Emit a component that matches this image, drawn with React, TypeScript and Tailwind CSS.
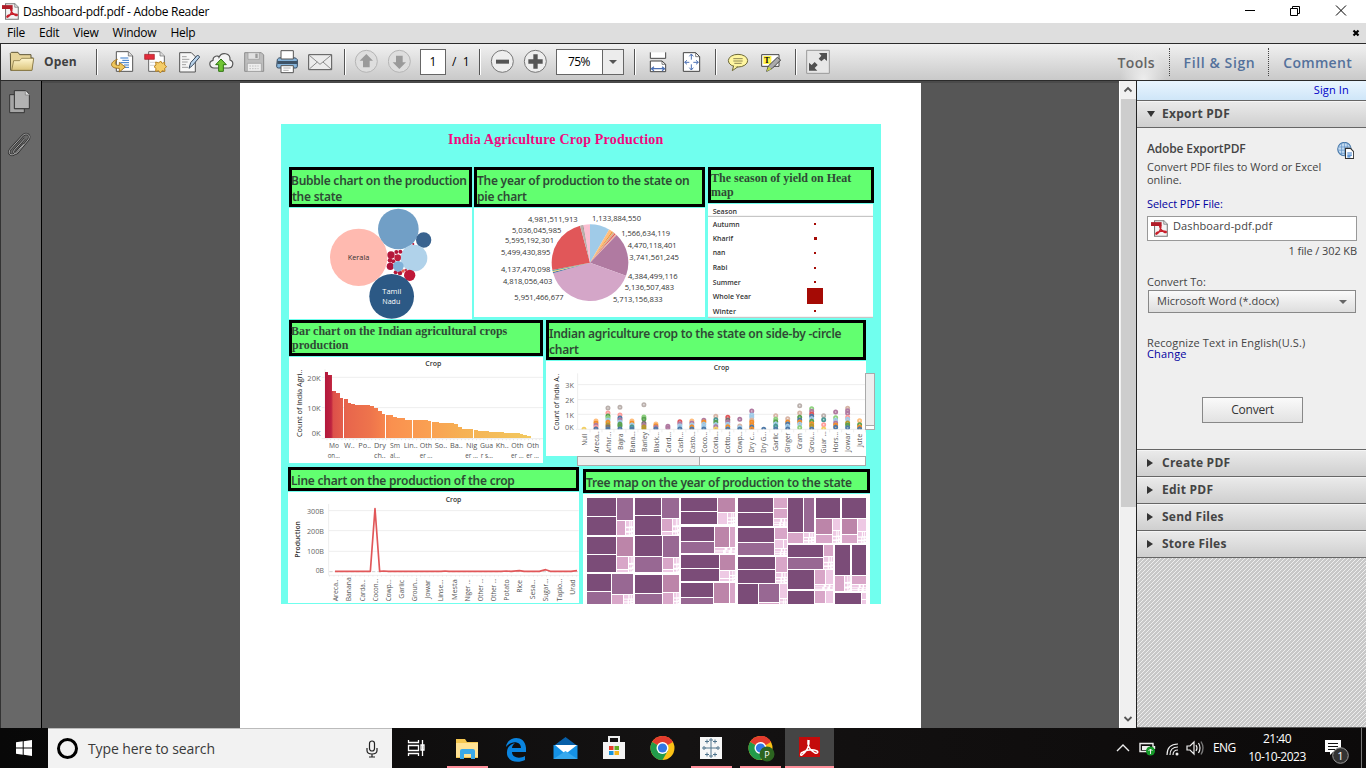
import React from "react";

type Kids = { children?: React.ReactNode };

/* ---------- toolbar helpers: icons are drawn on a grid of three units per pixel ---------- */
function Slot({ x, w, y = 132, children }: Kids & { x: number; w: number; y?: number }) {
  return (
    <svg className="block h-9 shrink-0" width={w} height={36} viewBox={`${x} ${y} ${w * 3} 108`}>
      {children}
    </svg>
  );
}
function Sep() {
  return <div className="h-[26px] w-[2px] shrink-0 border-l border-[#555] bg-white" />;
}
function Label({ x, y, w, s = 22, b, c = "#333", anchor = "start", font = "Open Sans, Noto Sans, sans-serif", children }: any) {
  return (
    <text x={x} y={y} fontSize={s} fontWeight={b || 400} fill={c} textAnchor={anchor} fontFamily={font} textLength={w} lengthAdjust="spacingAndGlyphs">
      {children}
    </text>
  );
}
function VLabel({ x, y, w, s = 21, b, c = "#555", children }: any) {
  return (
    <text transform={`translate(${x} ${y}) rotate(-90)`} fontSize={s} fontWeight={b || 400} fill={c} textLength={w} lengthAdjust="spacingAndGlyphs" fontFamily="Open Sans, Noto Sans, sans-serif">
      {children}
    </text>
  );
}

function PdfIcon({ size }: { size: number }) {
  return (
    <svg width={size} height={size} viewBox="0 0 48 48" className="block shrink-0">
      <path d="M10 2h26l10 10v34H10z" fill="#f4f4f4" stroke="#777" strokeWidth="3" />
      <path d="M36 2v10h10" fill="#ddd" stroke="#777" strokeWidth="2" />
      <path d="M0 6h30v11H0z" fill="#b01c28" />
      <path d="M28 16c1 9-5 20-12 24-4 1-3-4 4-6 7-3 15-4 22-2 3 2 0 5-4 3-7-4-13-12-14-19" fill="none" stroke="#c8202c" strokeWidth="4" />
    </svg>
  );
}

/* ---------- charts ---------- */
function BubbleChart() {
  const dots = [
    [330, 405, 11, "#b4173a"], [346, 396, 6, "#b4173a"], [358, 395, 6, "#b4173a"], [350, 413, 10, "#be1f3d"],
    [327, 421, 7, "#b4173a"], [337, 424, 6, "#b4173a"], [328, 439, 11, "#ae123a"], [344, 457, 6, "#b4173a"],
    [357, 459, 7, "#b4173a"], [366, 453, 5, "#e8604c"], [374, 450, 4, "#c9304a"], [397, 372, 3, "#b4173a"],
    [386, 466, 17, "#be1838"], [352, 439, 16, "#7fb0d8"],
  ] as const;
  return (
    <svg className="block bg-white" width={183} height={111} viewBox="24 264 549 333">
      <circle cx="233" cy="412" r="86" fill="#ffbab0" />
      <circle cx="352" cy="327" r="61" fill="#719fc6" />
      <circle cx="428" cy="360" r="23" fill="#39638f" />
      <circle cx="399" cy="414" r="40" fill="#b0d2ea" />
      {dots.map((d, i) => <circle key={i} cx={d[0]} cy={d[1]} r={d[2]} fill={d[3]} />)}
      <circle cx="332" cy="529" r="67" fill="#2c5985" />
      <Label x={200} y={419} w={65} s={21}>Kerala</Label>
      <Label x={304} y={522} w={57} s={21} c="#fff">Tamil</Label>
      <Label x={304} y={552} w={54} s={21} c="#fff">Nadu</Label>
    </svg>
  );
}

function PieChart() {
  const cx = 390, cy = 308, r = 115;
  const slices: [number, number, string][] = [
    [0, 30, "#a0cbe8"], [30, 35, "#ffbe7d"], [35, 37, "#f28e2b"], [37, 40, "#d9b48c"], [40, 42, "#e15759"], [42, 44, "#f3b8a0"],
    [44, 110, "#b07aa1"], [110, 254, "#d4a6c8"], [254, 256, "#4e79a7"], [256, 257.5, "#f1ce63"], [257.5, 259, "#499894"],
    [259, 345, "#e15759"], [345, 349, "#bab0ac"], [349, 350, "#79706e"], [350, 360, "#fabfd2"],
  ];
  const p = (a: number) => {
    const t = (a * Math.PI) / 180;
    return `${cx + r * Math.sin(t)} ${cy - r * Math.cos(t)}`;
  };
  const labels: [number, number, number, string][] = [
    [204, 185, 149, "4,981,511,913"], [396, 182, 147, "1,133,884,550"], [156, 219, 148, "5,036,045,985"], [135, 249, 147, "5,595,192,301"],
    [123, 285, 148, "5,499,430,895"], [123, 335, 148, "4,137,470,098"], [129, 371, 148, "4,818,056,403"], [163, 420, 148, "5,951,466,677"],
    [484, 228, 146, "1,566,634,119"], [503, 264, 147, "4,470,118,401"], [508, 300, 149, "3,741,561,245"], [504, 357, 149, "4,384,499,116"],
    [494, 390, 148, "5,136,507,483"], [459, 426, 149, "5,713,156,833"],
  ];
  return (
    <svg className="block bg-white" width={231} height={109} viewBox="42 144 693 327">
      {slices.map(([a, b, c]) => (
        <path key={a} fill={c} d={`M${cx} ${cy}L${p(a)}A${r} ${r} 0 ${b - a > 180 ? 1 : 0} 1 ${p(b)}Z`} />
      ))}
      {labels.map((l) => <Label key={l[3]} x={l[0]} y={l[1]} w={l[2]} s={22} c="#333">{l[3]}</Label>)}
    </svg>
  );
}

function HeatMap() {
  const rows: [string, number, number, number, number][] = [
    ["Autumn", 200, 81, 6, 192], ["Kharif", 243, 61, 9, 236], ["nan", 285, 38, 6, 278], ["Rabi", 329, 44, 6, 323],
    ["Summer", 375, 84, 6, 366], ["Whole Year", 417, 115, 48, 408], ["Winter", 461, 70, 6, 452],
  ];
  return (
    <svg className="block bg-white" width={165} height={114} viewBox="744 132 495 342">
      <Label x={758} y={162} w={73} s={20} b={600}>Season</Label>
      <path d="M744 169H1239M744 472H1239" stroke="#bbb" strokeWidth="3" />
      {rows.map(([n, y, w, s, cy]) => (
        <g key={n}>
          <Label x={758} y={y} w={w} s={20} b={600}>{n}</Label>
          <rect x={1065 - s / 2} y={cy - s / 2} width={s} height={s} fill="#a50a05" shapeRendering="crispEdges" />
        </g>
      ))}
    </svg>
  );
}

function BarChart() {
  const bars = [
    [132, 141, 171], [141, 153, 180], [153, 165, 228], [165, 177, 234], [177, 186, 249], [189, 201, 252], [201, 210, 264], [210, 222, 267],
    [222, 267, 270], [267, 279, 273], [279, 291, 279], [291, 303, 288], [303, 312, 297], [315, 336, 300], [336, 348, 306], [348, 372, 309],
    [372, 393, 315], [396, 441, 315], [441, 450, 318], [453, 474, 321], [474, 519, 324], [519, 531, 327], [531, 543, 336], [543, 576, 342],
    [579, 591, 345], [591, 624, 348], [624, 669, 351], [669, 717, 354], [717, 726, 357], [726, 738, 360], [738, 750, 363],
  ];
  const top: [number, number, string][] = [
    [144, 30, "Mo"], [189, 32, "W.."], [232, 38, "Po.."], [279, 36, "Dry"], [327, 30, "Sm"], [368, 42, "Lin.."], [416, 37, "Oth"],
    [461, 38, "So.."], [507, 38, "Ba.."], [555, 34, "Nig"], [597, 39, "Gua"], [644, 39, "Kh.."], [691, 37, "Oth"], [737, 37, "Oth"],
  ];
  const low: [number, number, string][] = [
    [140, 37, "on..."], [279, 35, "ch.."], [327, 30, "al..."], [416, 38, "er ..."], [553, 38, "er ..."], [599, 37, "r s..."], [690, 38, "er ..."], [736, 38, "er ..."],
  ];
  return (
    <svg className="block bg-white" width={254} height={106} viewBox="24 126 762 318">
      <defs>
        <linearGradient id="heat" gradientUnits="userSpaceOnUse" x1="132" x2="750" y1="0" y2="0">
          <stop offset="0" stopColor="#b2183c" /><stop offset=".03" stopColor="#bd2340" /><stop offset=".04" stopColor="#dc504a" />
          <stop offset=".11" stopColor="#e8664c" /><stop offset=".22" stopColor="#ee744c" /><stop offset=".27" stopColor="#f47f4c" /><stop offset=".32" stopColor="#fa904f" />
          <stop offset=".5" stopColor="#faa052" /><stop offset=".66" stopColor="#f6b054" /><stop offset="1" stopColor="#f2c960" />
        </linearGradient>
      </defs>
      <path d="M122 187H786M122 278H786M132 163V369" stroke="#eee" strokeWidth="3" />
      <path d="M122 371H786" stroke="#e2e2e2" strokeWidth="2" />
      <path d="M137 374H780" stroke="#ddd" strokeWidth="4" strokeDasharray="2 9.2" />
      {bars.map(([a, b, t]) => <rect key={a} x={a} y={t} width={b - a} height={369 - t} fill="url(#heat)" shapeRendering="crispEdges" />)}
      <Label x={433} y={153} w={48} s={20} b={600}>Crop</Label>
      <Label x={79} y={197} w={40} c="#666">20K</Label>
      <Label x={79} y={288} w={40} c="#666">10K</Label>
      <Label x={92} y={362} w={27} c="#666">0K</Label>
      <VLabel x={62} y={366} w={202} s={21} b={500} c="#222">Count of India Agri..</VLabel>
      {top.map(([x, w, t]) => <Label key={x} x={x} y={399} w={w} c="#555">{t}</Label>)}
      {low.map(([x, w, t]) => <Label key={x} x={x} y={429} w={w} c="#555">{t}</Label>)}
    </svg>
  );
}

const B = "#4e79a7", S = "#a0cbe8", O = "#f28e2b", Q = "#ffbe7d", G = "#59a14f", N = "#8cd17d", Y = "#b6992d", T = "#499894",
  R = "#e15759", K = "#ff9d9a", W = "#79706e", A = "#bab0ac", V = "#b07aa1", C = "#d7b5a6";

function CircleChart() {
  const cols: [string, number, number, [number, string][]][] = [
    ["Null", 392, 36, [[343, "#f1ce63"]]],
    ["Areca..", 413, 64, [[318, Q], [324, O], [331, V], [337, K], [342, B]]],
    ["Arhar...", 413, 62, [[279, A], [294, K], [303, G], [309, N], [315, S], [322, O], [329, Y], [335, W], [342, B]]],
    ["Bajra", 405, 50, [[277, A], [300, K], [309, B], [315, V], [321, S], [328, G], [333, G], [342, B]]],
    ["Bana...", 413, 64, [[318, Q], [324, O], [330, S], [336, T], [342, B]]],
    ["Barley", 411, 60, [[269, A], [306, N], [312, G], [325, W], [331, V], [336, Y], [342, Y]]],
    ["Black...", 413, 62, [[327, Q], [332, O], [337, V], [342, B]]],
    ["Card...", 413, 62, [[334, V], [339, V]]],
    ["Cash...", 413, 62, [[320, R], [326, V], [332, S], [338, S], [342, B]]],
    ["Casto...", 415, 66, [[318, Q], [324, V], [330, S], [336, O], [342, B]]],
    ["Coco...", 413, 62, [[316, V], [321, O], [328, S], [335, S], [342, B]]],
    ["Coria...", 415, 66, [[304, C], [314, T], [322, G], [329, S], [335, V], [342, "#f1ce63"]]],
    ["Cotto...", 415, 66, [[307, R], [315, W], [321, V], [328, S], [335, O], [342, B]]],
    ["Cowp...", 415, 66, [[313, V], [333, C], [338, S], [343, B]]],
    ["Dry c...", 413, 62, [[288, V], [300, S], [306, S], [315, C], [321, O], [329, O], [336, B], [342, O]]],
    ["Dry G...", 413, 62, [[343, B]]],
    ["Garlic", 408, 54, [[302, C], [313, N], [320, G], [327, S], [334, T], [342, B]]],
    ["Ginger", 413, 60, [[311, C], [321, O], [327, B], [334, S], [342, B]]],
    ["Gram", 403, 48, [[272, A], [294, C], [307, G], [315, B], [321, O], [328, S], [338, N]]],
    ["Grou...", 413, 62, [[281, N], [289, V], [297, R], [304, B], [311, S], [319, G], [326, O], [333, Y], [342, B]]],
    ["Guar ...", 415, 66, [[302, A], [314, T], [329, K], [342, "#f1ce63"]]],
    ["Hors...", 413, 62, [[291, V], [308, N], [316, S], [324, V], [330, O], [337, B]]],
    ["Jowar", 411, 58, [[280, C], [287, V], [295, V], [307, K], [313, S], [324, Y], [330, G], [338, B]]],
    ["Jute", 396, 40, [[317, Q], [329, G], [336, O], [342, B]]],
  ];
  return (
    <svg className="block bg-white" width={320} height={95} viewBox="18 138 960 285">
      <defs><clipPath id="plot"><path d="M108 170H978V343H108z" /></clipPath></defs>
      <path d="M113 209H978M113 254H978M113 298H978M113 175V343M108 343H978" stroke="#eee" strokeWidth="3" />
      <Label x={521} y={164} w={47} s={20} b={600}>Crop</Label>
      <Label x={76} y={219} w={26} c="#666">3K</Label>
      <Label x={76} y={264} w={26} c="#666">2K</Label>
      <Label x={76} y={308} w={26} c="#666">1K</Label>
      <Label x={75} y={346} w={26} c="#666">0K</Label>
      <VLabel x={58} y={346} w={170} b={500} c="#222">Count of India A..</VLabel>
      {cols.map(([n, by, w, ds], i) => {
        const x = 132 + i * 35.95;
        return (
          <g key={n}>
            <g clipPath="url(#plot)">
              {ds.map(([y, c]) => <circle key={y} cx={x} cy={y} r="5" fill={c} fillOpacity=".35" stroke={c} strokeWidth="5" />)}
            </g>
            <VLabel x={x + 8} y={by} w={w}>{n}</VLabel>
            <path d={`M${x + 18} 344v8`} stroke="#e5e5e5" strokeWidth="2" />
          </g>
        );
      })}
    </svg>
  );
}

function LineChart() {
  const names: [string, number, number][] = [
    ["Areca..", 424, 66], ["Banana", 424, 72], ["Carda...", 424, 66], ["Cocon...", 424, 68], ["Cowp...", 424, 66], ["Garlic", 416, 56],
    ["Groun...", 424, 70], ["Jowar", 416, 56], ["Linse...", 424, 66], ["Mesta", 420, 62], ["Niger ...", 424, 66], ["Other ...", 424, 68],
    ["Other ...", 424, 68], ["Potato", 422, 64], ["Rice", 398, 38], ["Sesa...", 418, 60], ["Sugar...", 424, 68], ["Tapio...", 424, 68], ["Urad", 404, 46],
  ];
  return (
    <svg className="block bg-white" width={291} height={111} viewBox="21 96 873 333">
      <path d="M143 152H893M143 212H893M143 274H893M143 132V346M143 346H893" stroke="#eee" strokeWidth="3" />
      <path d="M145 335H893" stroke="#bbb" strokeWidth="2" strokeDasharray="10 6" />
      <path d="M145 348H893" stroke="#ddd" strokeWidth="3" strokeDasharray="2 11" />
      <path d="M162 334H268L282 146L296 334L308 333L322 334H480L492 333L504 334H660L676 333L690 334L715 332L730 334H775L794 329L808 334H870L888 332" fill="none" stroke="#e15759" strokeWidth="5" strokeLinejoin="round" />
      <Label x={494} y={125} w={47} s={20} b={600}>Crop</Label>
      <Label x={78} y={161} w={51} c="#666">300B</Label>
      <Label x={78} y={221} w={51} c="#666">200B</Label>
      <Label x={78} y={282} w={51} c="#666">100B</Label>
      <Label x={104} y={339} w={25} c="#666">0B</Label>
      <VLabel x={58} y={293} w={110} b={600} c="#333">Production</VLabel>
      {names.map(([n, y, w], i) => <VLabel key={i} x={172 + i * 39.4} y={y} w={w}>{n}</VLabel>)}
    </svg>
  );
}

type Cell = [number, number, number, number, string];
function TreeMap() {
  const D = "#7b4c78", M = "#986893", Z = "#bc85a9", P = "#d8a6c8", L = "#eec9e4";
  const cells: Cell[] = [
    [21, 99, 87, 54, D], [21, 156, 87, 54, D], [111, 99, 48, 66, M], [111, 168, 24, 42, P],
    [21, 216, 87, 51, D], [21, 270, 87, 51, D], [111, 216, 48, 57, Z], [111, 276, 33, 36, P], [111, 315, 33, 6, L],
    [21, 327, 72, 51, D], [21, 381, 72, 36, M], [96, 327, 63, 60, M], [96, 390, 33, 27, P],
    [165, 99, 78, 51, D], [165, 153, 78, 57, D], [246, 99, 51, 60, M], [246, 162, 30, 36, P], [246, 201, 30, 9, L],
    [165, 213, 81, 60, D], [165, 276, 81, 45, M], [249, 213, 48, 63, M], [249, 279, 30, 33, P], [249, 315, 30, 6, L],
    [165, 330, 81, 54, D], [165, 387, 81, 30, M], [249, 330, 48, 51, Z], [249, 384, 30, 33, P],
    [303, 99, 108, 39, D], [303, 141, 108, 36, D], [414, 99, 51, 42, Z], [414, 144, 27, 33, L],
    [303, 186, 99, 42, D], [303, 231, 99, 33, M], [405, 186, 42, 60, Z], [450, 186, 15, 60, P],
    [303, 270, 114, 39, D], [303, 312, 114, 36, D], [420, 270, 45, 45, Z], [420, 318, 27, 21, L], [420, 342, 27, 6, L],
    [303, 354, 96, 42, D], [303, 399, 96, 18, M], [402, 354, 45, 60, Z], [450, 354, 15, 60, P],
    [474, 99, 105, 42, D], [474, 144, 105, 39, D], [582, 99, 39, 30, P], [582, 132, 39, 27, P],
    [474, 189, 108, 42, D], [474, 234, 108, 36, M], [585, 189, 36, 33, P], [585, 225, 24, 24, L], [612, 225, 9, 24, L],
    [474, 276, 111, 36, D], [474, 315, 111, 39, D], [588, 276, 33, 45, P],
    [474, 357, 60, 60, D], [537, 357, 60, 54, M], [537, 414, 60, 3, P], [600, 357, 21, 42, L],
    [624, 99, 45, 102, D], [672, 99, 30, 102, M], [624, 204, 45, 30, P],
    [624, 240, 105, 36, D], [624, 279, 105, 33, M], [732, 240, 27, 33, P],
    [624, 315, 78, 57, D], [705, 315, 30, 42, P], [738, 315, 21, 42, L],
    [624, 378, 78, 39, D], [705, 378, 30, 36, P], [738, 378, 21, 36, L],
    [708, 99, 72, 60, D], [708, 162, 48, 45, Z], [708, 210, 48, 24, P], [759, 162, 21, 33, L],
    [786, 99, 72, 60, D], [786, 162, 45, 45, Z], [786, 210, 45, 24, P], [834, 162, 24, 36, L],
    [765, 240, 45, 90, D], [816, 240, 42, 90, D], [765, 333, 27, 45, P], [816, 333, 42, 24, P],
    [765, 384, 78, 33, D], [846, 384, 12, 18, L], [846, 405, 12, 12, L],
  ];
  const tiny: number[][] = [
    [138, 168, 21, 42], [147, 276, 12, 45], [132, 390, 27, 27], [279, 162, 18, 48], [282, 279, 15, 42], [282, 384, 15, 33],
    [444, 144, 21, 33], [405, 249, 60, 15], [450, 318, 15, 30], [582, 162, 39, 21], [585, 252, 36, 18], [588, 324, 33, 30],
    [600, 402, 21, 15], [672, 204, 30, 30], [732, 276, 27, 36], [705, 360, 54, 12], [759, 198, 21, 36], [834, 201, 24, 33],
    [795, 333, 15, 45], [816, 360, 42, 18],
  ];
  const parts = [[0, 0, .48, .4], [.62, 0, .14, .38], [.86, 0, .14, .38], [0, .52, .4, .18], [.54, .52, .15, .17], [.84, .52, .14, .1], [0, .84, .4, .13], [.54, .84, .14, .12], [.84, .8, .14, .1]];
  return (
    <svg className="block bg-white" width={287} height={110} viewBox="9 87 861 330" shapeRendering="crispEdges">
      {cells.map(([x, y, w, h, c], i) => <rect key={i} x={x} y={y} width={w} height={h} fill={c} />)}
      {tiny.map(([x, y, w, h], i) => parts.map((p, j) => (
        <rect key={`${i}-${j}`} x={x + p[0] * w} y={y + p[1] * h} width={Math.max(2.5, p[2] * w)} height={Math.max(2.5, p[3] * h)} fill={L} shapeRendering="auto" />
      )))}
    </svg>
  );
}

/* ---------- dashboard ---------- */
function Heading({ cls, children }: Kids & { cls: string }) {
  return <h3 className={`mb-px box-border whitespace-pre border-[3px] border-black bg-[#62ff70] text-[#2f4a35] ${cls}`}>{children}</h3>;
}
const sans = "font-['Noto_Sans',sans-serif] text-[12px] font-semibold leading-4 pt-[3px] tracking-[-0.25px]";
const serif = "font-['Liberation_Serif',serif] text-[12px] font-bold leading-[14px] pt-px";

function Dashboard() {
  return (
    <div className="h-[480px] w-[600px] overflow-hidden bg-[#70ffee]">
      <h2 className="h-[43px] pt-[8px] pl-[167px] font-['Liberation_Serif',serif] text-[14px] leading-4 font-bold tracking-[0.2px] text-[#f2087f]">India Agriculture Crop Production</h2>
      <div className="flex h-[153px] pl-2">
        <div className="w-[185px]">
          <Heading cls={`h-10 w-[183px] ${sans}`}><span className="-ml-px">{"Bubble chart on the production\nthe state"}</span></Heading>
          <BubbleChart />
        </div>
        <div className="w-[234px]">
          <Heading cls={`h-10 w-[231px] ${sans}`}>{"The year of production to the state on\npie chart"}</Heading>
          <PieChart />
        </div>
        <div>
          <Heading cls={`h-9 w-[166px] ${serif}`}>{"The season of yield on Heat\nmap"}</Heading>
          <HeatMap />
        </div>
      </div>
      <div className="flex h-[147px] pl-2">
        <div className="w-[257px]">
          <Heading cls={`h-9 w-[254px] ${serif}`}><span className="-ml-px">{"Bar chart on the Indian agricultural crops\nproduction"}</span></Heading>
          <BarChart />
        </div>
        <div>
          <Heading cls={`h-10 w-[320px] ${sans}`}>{"Indian agriculture crop to the state on side-by -circle\nchart"}</Heading>
          <div className="flex">
            <CircleChart />
            <div className="-ml-px mt-3 flex h-[57px] w-[10px] flex-col border border-[#aaa] bg-white">
              <div className="h-[52px] border-b border-[#aaa] bg-[#eee]" />
            </div>
          </div>
          <div className="ml-[31px] flex h-[10px] w-[289px] border border-[#aaa] bg-white">
            <div className="w-[122px] border-r border-[#aaa] bg-[#eee]" />
          </div>
        </div>
      </div>
      <div className="flex pl-[7px]">
        <div className="w-[295px]">
          <Heading cls={`h-6 w-[291px] ${sans} leading-[15px]`}>Line chart on the production of the crop</Heading>
          <LineChart />
        </div>
        <div className="pt-[2px]">
          <Heading cls={`h-6 w-[287px] ${sans} leading-[15px]`}>Tree map on the year of production to the state</Heading>
          <TreeMap />
        </div>
      </div>
    </div>
  );
}

/* ---------- application chrome ---------- */
function Toolbar() {
  return (
    <div className="flex h-[38px] items-center border-y border-[#2b2b2b] border-l bg-gradient-to-b from-[#f1f1f1] to-[#c9c9c9]">
      <Slot x={3} w={40}>
        <defs>
          <linearGradient id="fold" x1="0" y1="0" x2="0" y2="1"><stop stopColor="#fff6cf" /><stop offset="1" stopColor="#dcc57c" /></linearGradient>
        </defs>
        <path d="M31 160l3-3h20l5 7h34v10h7l-5 37H32z" fill="#e6d49a" stroke="#5f5737" strokeWidth="3" />
        <path d="M35 211l6-29h18l6-7h36l-5 36z" fill="url(#fold)" stroke="#8a7a44" strokeWidth="2.5" />
      </Slot>
      <span className="w-[55px] pl-[3px] font-['Open_Sans',sans-serif] text-[12px] font-bold tracking-[0.15px] text-[#404040]">Open</span>
      <Sep />
      <Slot x={294} w={43}>
        <path d="M349 155h36l13 13v46h-49z" fill="#fff" stroke="#555" strokeWidth="3" />
        <path d="M385 155v13h13" fill="#ddd" stroke="#555" strokeWidth="2" />
        <path d="M361 174h24M367 181h20M361 188h26M372 195h15M374 202h13" stroke="#3278ca" strokeWidth="3" />
        <path d="M352 178c-24 8-24 28 6 27v11l18-15-18-14v9c-14 1-16-7-6-18z" fill="#efc75b" stroke="#916316" strokeWidth="2.5" />
      </Slot>
      <Slot x={423} w={33}>
        <path d="M446 155h34l13 13v46h-47z" fill="#fff" stroke="#666" strokeWidth="3" />
        <path d="M480 155v13h13" fill="#ddd" stroke="#666" strokeWidth="2" />
        <path d="M434 163h29v15h-29z" fill="#e22c3b" stroke="#a01720" strokeWidth="2" />
        <path d="M450 187h30M450 196h20" stroke="#bbb" strokeWidth="2" />
        <path d="M482 183l4 7 8-3 0 8 6 5-6 5 1 9-9-2-5 7-5-7-9 2 1-9-6-5 6-5-1-9 9 3z" fill="#f5cd68" stroke="#bb8523" strokeWidth="3" />
      </Slot>
      <Slot x={522} w={33}>
        <path d="M539 158h35l12 12v46h-47z" fill="#f6f6f6" stroke="#555" strokeWidth="3" />
        <path d="M546 170h14M546 178h22M546 186h17M546 194h12M546 202h18" stroke="#777" strokeWidth="2" />
        <path d="M567 205l5-17 21-23 6 6-21 25z" fill="#bad4ec" stroke="#38495c" strokeWidth="3" />
      </Slot>
      <Slot x={621} w={35}>
        <path d="M642 204c-14-1-18-19-3-23-1-14 16-16 18-9 8-18 35-13 33 8 14 5 9 24-4 24z" fill="#f4f4f4" stroke="#555" strokeWidth="3.5" />
        <path d="M663 177l16 17h-9v20h-14v-20h-9z" fill="#71c534" stroke="#2e7412" strokeWidth="3" />
      </Slot>
      <Slot x={726} w={31}>
        <path d="M734 158h50l7 7v49h-57z" fill="#bdbdbd" stroke="#8e8e8e" strokeWidth="3" />
        <path d="M744 158h34v20h-34z" fill="#e1e1e1" stroke="#999" strokeWidth="2" /><path d="M766 161h7v13h-7z" fill="#999" />
        <path d="M742 190h42v24h-42z" fill="#eee" stroke="#999" strokeWidth="2" /><path d="M748 198h28M748 206h28" stroke="#aaa" strokeWidth="2" strokeDasharray="5 3" />
      </Slot>
      <Slot x={819} w={33}>
        <path d="M832 178q3-5 10-5h38q9 0 12 6v20q0 5-5 5h-52q-5 0-5-5z" fill="#86b4da" stroke="#34495f" strokeWidth="3" />
        <path d="M843 152h37v25h-37z" fill="#fff" stroke="#555" strokeWidth="3" />
        <path d="M832 183h60v9h-60z" fill="#3e5367" />
        <path d="M843 197h37v21h-37z" fill="#fff" stroke="#555" strokeWidth="3" /><path d="M850 204h22M850 211h16" stroke="#888" strokeWidth="2" />
      </Slot>
      <Slot x={918} w={36}>
        <path d="M926 164h69v45h-69z" fill="#ececec" stroke="#555" strokeWidth="3" />
        <path d="M928 166l32 27 33-27M928 207l24-21M993 207l-24-21" fill="none" stroke="#777" strokeWidth="2.5" />
      </Slot>
      <div className="w-[2px]" />
      <Sep />
      <Slot x={1038} w={42}>
        <circle cx="1099" cy="184" r="33" fill="#dedede" stroke="#b5b5b5" strokeWidth="3" />
        <path d="M1099 162l20 20h-10v20h-20v-20h-10z" fill="#9a9a9a" />
      </Slot>
      <Slot x={1164} w={30}>
        <circle cx="1198" cy="184" r="33" fill="#dedede" stroke="#b5b5b5" strokeWidth="3" />
        <path d="M1198 207l20-20h-10v-20h-20v20h-10z" fill="#9a9a9a" />
      </Slot>
      <div className="ml-[2px] flex h-[26px] w-[26px] items-center justify-center border border-[#666] bg-white font-['Open_Sans',sans-serif] text-[12px]">1</div>
      <span className="w-[33px] whitespace-pre pl-[6px] font-['Open_Sans',sans-serif] text-[12px]">/  1</span>
      <Sep />
      <Slot x={243} y={12} w={38}>
        <circle cx="307" cy="64" r="33" fill="#eee" stroke="#777" strokeWidth="3" /><path d="M288 59h39v12h-39z" fill="#555" />
      </Slot>
      <Slot x={357} y={12} w={37}>
        <circle cx="406" cy="64" r="33" fill="#eee" stroke="#777" strokeWidth="3" /><path d="M400 43h13v15h15v13h-15v15h-13V71h-15V58h15z" fill="#555" />
      </Slot>
      <div className="flex h-[26px] w-[68px] items-center border border-[#666] bg-white">
        <span className="w-[45px] pl-[11px] font-['Open_Sans',sans-serif] text-[12px] tracking-[-0.6px]">75%</span>
        <div className="flex h-full flex-1 items-center justify-center border-l border-[#666] bg-[#ececec]">
          <div className="border-x-[4px] border-t-[4px] border-x-transparent border-t-[#555]" />
        </div>
      </div>
      <div className="w-[10px]" />
      <Sep />
      <Slot x={708} y={12} w={78}>
        <path d="M751 37v18h46V37" fill="#fff" stroke="#444" strokeWidth="3" />
        <path d="M751 95V63h35l11 10v22z" fill="#fff" stroke="#444" strokeWidth="3" /><path d="M786 63v10h11" fill="none" stroke="#444" strokeWidth="2" />
        <path d="M755 86h38M762 80l-8 6 8 6M786 80l8 6-8 6" fill="none" stroke="#4d71b5" strokeWidth="3.5" />
        <path d="M850 38h37l12 12v44h-49z" fill="#fff" stroke="#444" strokeWidth="3" /><path d="M887 38v12h12" fill="none" stroke="#444" strokeWidth="2" />
        <path d="M854 67h14M880 67h15M874 42v17M874 73v17M861 61l-7 6 7 6M888 61l7 6-7 6M868 49l6-7 6 7M868 83l6 7 6-7" fill="none" stroke="#4d71b5" strokeWidth="3" />
      </Slot>
      <div className="w-px" />
      <Sep />
      <Slot x={951} y={12} w={77}>
        <ellipse cx="1014" cy="62" rx="29" ry="19" fill="#fff6a0" stroke="#6c6838" strokeWidth="3" /><path d="M1001 77l-4 15 17-12" fill="#fff6a0" stroke="#6c6838" strokeWidth="3" />
        <path d="M1000 56h28M1000 63h28M1003 70h22" stroke="#777044" strokeWidth="2.5" />
        <path d="M1085 44h52v35h-52z" fill="#fff" stroke="#444" strokeWidth="3" /><path d="M1090 48h24v24h-24z" fill="#fff347" />
        <text x="1093" y="69" fontSize="24" fontWeight="700" fontFamily="Liberation Serif, serif">T</text>
        <path d="M1100 94l5-16 27-26 10 8-25 25z" fill="#aaa" stroke="#444" strokeWidth="3" /><path d="M1100 94l5-14 10 7z" fill="#c8d642" />
      </Slot>
      <div className="w-px" />
      <Sep />
      <Slot x={1191} y={12} w={42}>
        <path d="M1220 31h68v69h-68z" fill="#e7e7e7" stroke="#999" strokeWidth="3" />
        <path d="M1281 39v24l-8-7-9 8-8-8 8-9-7-8zM1227 92V68l8 7 9-9 9 9-9 9 8 8z" fill="#505050" />
      </Slot>
      <div className="ml-auto flex h-full items-center whitespace-nowrap pr-[14px] font-['Open_Sans',sans-serif] text-[14px] font-semibold text-[#54719b]">
        <span className="flex h-full w-[51px] items-center bg-[radial-gradient(ellipse_at_bottom,#eeeeee_0%,transparent_65%)] tracking-[0.3px] text-[#656565]">Tools</span>
        <span className="h-7 border-l border-dotted border-[#444]" />
        <span className="mr-[13px] ml-[14px] tracking-[0.6px]">Fill &amp; Sign</span>
        <span className="mr-[14px] h-7 border-l border-dotted border-[#444]" />
        <span className="tracking-[0.3px]">Comment</span>
      </div>
    </div>
  );
}

function NavRail() {
  return (
    <div className="h-full w-[42px] border-r border-l border-l-[#333] border-r-black bg-[#686868]">
      <svg width="40" height="90" viewBox="3 243 120 270" className="block">
        <path d="M29 284h15v42h29v12H29z" fill="#a5a5a5" stroke="#333" strokeWidth="3" />
        <path d="M43 272h35l10 11v43H43z" fill="#b2b2b2" stroke="#333" strokeWidth="3" /><path d="M76 272v13h13" fill="#ddd" stroke="#777" strokeWidth="2" />
        <path d="M75 415L43 450c-6 8 2 15 9 8l32-38c12-16-7-24-17-12L31 448c-9 12 2 23 15 12l25-28" fill="none" stroke="#303030" strokeWidth="7" />
        <path d="M75 415L43 450c-6 8 2 15 9 8l32-38c12-16-7-24-17-12L31 448c-9 12 2 23 15 12l25-28" fill="none" stroke="#a9a9a9" strokeWidth="3" />
      </svg>
    </div>
  );
}

function Section({ children, open }: Kids & { open?: boolean }) {
  return (
    <div className="flex h-[27px] items-center border-b border-[#666] bg-gradient-to-b from-[#ebebeb] to-[#cfcfcf] pl-[10px] font-['Open_Sans',sans-serif] text-[12px] font-bold tracking-[0.25px] text-[#444] shadow-[inset_0_1px_#f5f5f5]">
      {open
        ? <div className="mr-[7px] border-x-[4px] border-t-[6px] border-x-transparent border-t-[#333]" />
        : <div className="mr-[9px] border-y-[4px] border-l-[6px] border-y-transparent border-l-[#333]" />}
      {children}
    </div>
  );
}

function SidePanel() {
  return (
    <div className="flex h-full w-[230px] flex-col border-l border-[#222] bg-[#efefef] font-['Open_Sans',sans-serif] text-[11px] text-[#444]">
      <div className="h-5 shrink-0 border-b border-[#666] bg-gradient-to-b from-[#e9f5ff] to-[#cfe6f8] pr-[17px] text-right leading-[18px] tracking-[0.15px] text-[#0000c8]">Sign In</div>
      <Section open>Export PDF</Section>
      <div className="h-[321px] shrink-0 pl-[10px]">
        <div className="flex h-8 items-end justify-between pr-3">
          <b className="pb-[2px] text-[12px] leading-[18px] font-semibold tracking-[-0.15px]">Adobe ExportPDF</b>
          <svg width="17" height="17" viewBox="0 0 48 48" className="mb-px">
            <circle cx="21" cy="20" r="19" fill="#c5dcf2" stroke="#4878a8" strokeWidth="3" />
            <path d="M3 14h35M2 23h30M7 32h20M13 3v34M21 1v38M29 3v18" stroke="#5f90c4" strokeWidth="2" />
            <path d="M24 18h14l9 9v20H24z" fill="#fff" stroke="#333" strokeWidth="3" /><path d="M29 31h13M29 37h13M29 42h9" stroke="#3278ca" strokeWidth="3" />
          </svg>
        </div>
        <p className="h-[28px] leading-[13px]">Convert PDF files to Word or Excel<br />online.</p>
        <p className="pt-[9px] leading-[14px] tracking-[-0.05px] text-[#0000a0]">Select PDF File:</p>
        <div className="mt-[5px] flex h-[25px] w-[210px] items-center border border-[#999] bg-white pl-[3px]">
          <PdfIcon size={17} /><span className="pl-[5px] pb-[5px] tracking-[0.1px]">Dashboard-pdf.pdf</span>
        </div>
        <p className="w-[210px] pt-[3px] text-right leading-[14px] tracking-[-0.1px]">1 file / 302 KB</p>
        <p className="pt-[17px] leading-[14px] tracking-[0px]">Convert To:</p>
        <div className="mt-[1px] ml-px flex h-[23px] w-[208px] items-center justify-between border border-[#888] bg-gradient-to-b from-[#fafafa] to-[#dedede] px-[8px]">
          Microsoft Word (*.docx)
          <div className="border-x-[4px] border-t-[4px] border-x-transparent border-t-[#666]" />
        </div>
        <p className="pt-[24px] leading-[12px] tracking-[0.13px]">Recognize Text in English(U.S.)</p>
        <p className="h-[11px] leading-[10px] tracking-[0.15px] text-[#0000a0]">Change</p>
        <div className="mt-[37px] ml-[55px] flex h-[26px] w-[101px] items-center justify-center border border-[#888] bg-gradient-to-b from-[#fafafa] to-[#e2e2e2] text-[12px] tracking-[-0.2px] text-[#333]">Convert</div>
      </div>
      <div className="shrink-0 border-t border-[#666]">
        <Section>Create PDF</Section>
        <Section>Edit PDF</Section>
        <Section>Send Files</Section>
        <Section>Store Files</Section>
      </div>
      <svg className="block w-full flex-1 border-b border-[#555] bg-[#c8c8c8]" shapeRendering="auto">
        <defs>
          <pattern id="hatch" width="4" height="4" patternUnits="userSpaceOnUse">
            <path d="M-1 1L1-1M0 4L4 0M3 5L5 3" stroke="#eeeeee" strokeWidth="1" />
          </pattern>
        </defs>
        <rect width="100%" height="100%" fill="url(#hatch)" />
      </svg>
    </div>
  );
}

function Chrome({ p }: { p?: boolean }) {
  return (
    <svg width="49" height="40" viewBox="0 0 49 40" className="block">
      <circle cx="24.500" cy="20" r="12" fill="#fbc116" />
      <path d="M24.500 20L14.100 14A12 12 0 0 1 34.900 14z" fill="#e33b2e" />
      <path d="M24.500 8a12 12 0 0 1 10.400 6H24.500z" fill="#e33b2e" />
      <path d="M14.100 14A12 12 0 0 0 24.500 32l5.200-9-5.200-3z" fill="#229b4b" />
      <circle cx="24.500" cy="20" r="6" fill="#fff" /><circle cx="24.500" cy="20" r="4.600" fill="#3277e5" />
      {p && <><circle cx="31" cy="26" r="7.500" fill="#2c6420" /><text x="31" y="29.500" textAnchor="middle" fontSize="9" fill="#fff" fontFamily="Open Sans, sans-serif">P</text></>}
    </svg>
  );
}
function App49({ children, on, active }: Kids & { on?: boolean; active?: boolean }) {
  return (
    <div className={`relative h-10 w-[49px] shrink-0 ${active ? "bg-[#454545]" : ""}`}>
      {children}
      {on && <div className={`absolute bottom-0 h-[2px] bg-[#ff8f9a] ${active ? "inset-x-0" : "inset-x-[4px]"}`} />}
    </div>
  );
}

function Taskbar() {
  return (
    <div className="flex h-10 shrink-0 bg-gradient-to-r from-[#080808] via-[#141212] to-[#0c0a0a]">
      <svg width="48" height="40" className="block shrink-0"><path d="M16 14.300l6.700-1v6.200H16zM23.700 13.200l8.300-1.200v7.500h-8.300zM16 20.500h6.700v6.200l-6.700-1zM23.700 20.500H32V28l-8.300-1.200z" fill="#fff" /></svg>
      <div className="flex w-[344px] shrink-0 items-center border-t border-[#bbb] bg-[#f2f2f2]">
        <div className="ml-[9px] size-[21px] rounded-full border-[3px] border-black" />
        <span className="ml-[10px] font-['Open_Sans',sans-serif] text-[14px] tracking-[-0.1px] text-[#3a3a3a]">Type here to search</span>
        <svg width="14" height="18" viewBox="0 0 14 18" className="mr-[13px] ml-auto" fill="none" stroke="#222" strokeWidth="1.200"><rect x="4.500" y="1" width="5" height="10" rx="2.500" /><path d="M2 8v2.500q0 3.500 5 3.500t5-3.500V8M7 14v3M4 17h6" /></svg>
      </div>
      <App49><svg width="49" height="40" fill="none" stroke="#fff" strokeWidth="1.300"><path d="M16.500 12v2.500h10V12M16.500 28v-2.500h10V28M16.500 17.500h10v5h-10zM30.500 12v16M29 17h3v5h-3z" /></svg></App49>
      <div className="w-[2px]" />
      <App49 on>
        <svg width="49" height="40"><path d="M13 11h9l2 3h11v16H13z" fill="#f4c650" /><path d="M13 15h22v14H13z" fill="#ffe294" /><path d="M17 31v-8q0-2 2-2h11q2 0 2 2v8h-4v-5h-7v5z" fill="#3aa8e8" /></svg>
      </App49>
      <App49><svg width="49" height="40"><path d="M14 19c1-11 19-13 20 1v4H20c0 6 8 7 13 4v4c-8 4-19 1-18-8 0-5 4-8 8-9-2 2-3 3-3 5h9c0-7-10-8-15-1z" fill="#0a84df" /></svg></App49>
      <App49><svg width="49" height="40"><path d="M12.500 18L24.500 9l12 9z" fill="#075fa8" /><path d="M12.500 17h24v14h-24z" fill="#1592e6" /><path d="M14 17h22L24.500 26z" fill="#fff" /><path d="M12.500 31l12-8 12 8z" fill="#36a8ee" /></svg></App49>
      <App49><svg width="49" height="40"><path d="M19 14v-5h10v5" fill="none" stroke="#eee" strokeWidth="2" /><path d="M13 14h22v17H13z" fill="#f4f4f4" /><path d="M19 18h4.500v4H19z" fill="#e63c2a" /><path d="M24.500 18H29v4h-4.500z" fill="#65ae22" /><path d="M19 23h4.500v4H19z" fill="#1793db" /><path d="M24.500 23H29v4h-4.500z" fill="#f6b51a" /></svg></App49>
      <div className="-ml-px"><App49><Chrome /></App49></div>
      <App49 on>
        <svg width="49" height="40"><path d="M13 9h22v22H13z" fill="#f7f7f7" /><path d="M24 14v12M18 20h12M24 10v4M22 12h4M24 26v4M22 28h4M15 20h4M17 18v4M29 20h4M31 18v4M18 13.500h4M20 11.500v4M26 13.500h4M28 11.500v4M18 26.500h4M20 24.500v4M26 26.500h4M28 24.500v4" stroke="#50748c" strokeWidth="1" /></svg>
      </App49>
      <App49 on><Chrome p /></App49>
      <App49 on active>
        <svg width="49" height="40"><path d="M14 9h21v20H14z" fill="#c40b0b" /><path d="M24 12c1 6-3 12-7 15-2 1-2-2 1-3 4-2 10-3 14-1 2 1 0 3-2 2-5-2-8-8-7-13" fill="none" stroke="#fff" strokeWidth="1.400" /></svg>
      </App49>
      <svg width="98" height="40" viewBox="1110 728 98 40" className="ml-auto block shrink-0" fill="none" stroke="#eee" strokeWidth="1.400">
        <path d="M1117 751l6-6 6 6" />
        <path d="M1140 743.500h13v8h-13zM1154.500 746v3" /><path d="M1142 746h8v4h-8z" fill="#eee" stroke="none" />
        <circle cx="1150.500" cy="751" r="4.500" fill="#149a28" stroke="none" /><path d="M1150.500 749v5M1148.500 751l2-2 2 2" strokeWidth="1" />
        <path d="M1167 755q0-11 11-11M1170 755q0-8 8-8M1173 755q0-5 5-5" strokeWidth="1.200" /><circle cx="1177" cy="754" r="1.500" fill="#eee" stroke="none" />
        <path d="M1187 746h3l4-4v12l-4-4h-3zM1196 745q2 3 0 6M1198.500 743q3 5 0 10" strokeWidth="1.200" /><path d="M1201 741.500q4 6.500 0 13" stroke="#777" />
      </svg>
      <div className="flex shrink-0 items-center font-['Open_Sans',sans-serif] text-[12px] text-white">
        <span className="w-[36px] pl-[5px] tracking-[-0.6px]">ENG</span>
        <div className="w-[66px] text-center text-[12px] leading-[18px] tracking-[-0.5px]">21:40<br />10-10-2023</div>
      </div>
      <svg width="56" height="40" viewBox="1310 728 56 40" className="block shrink-0">
        <path d="M1325 740h16v12h-8l-3 3v-3h-5z" fill="#fff" /><path d="M1328 743.500h10M1328 746.500h10M1328 749.500h7" stroke="#111" />
        <circle cx="1340.500" cy="755.500" r="7.800" fill="#333" stroke="#999" /><text x="1340.500" y="759.500" textAnchor="middle" fontSize="11" fill="#fff" fontFamily="Open Sans, sans-serif">1</text>
        <path d="M1361.500 728v40" stroke="#777" />
      </svg>
    </div>
  );
}

export default function App() {
  return (
    <div className="flex h-[768px] w-[1366px] flex-col overflow-hidden bg-white text-black">
      <div className="flex h-[23px] shrink-0 items-center pl-[2px] font-['Open_Sans',sans-serif] text-[12px] tracking-[-0.3px]">
        <PdfIcon size={17} /><span className="pl-1">Dashboard-pdf.pdf - Adobe Reader</span>
        <svg width="130" height="23" viewBox="1236 0 130 23" className="ml-auto block" fill="none" stroke="#000">
          <path d="M1245 10.500h10M1290.500 8.500h7v7h-7zM1292.500 8.500v-2h7v7h-2M1336 5.500l10 10M1346 5.500l-10 10" />
        </svg>
      </div>
      <div className="flex h-5 shrink-0 items-center gap-[14px] bg-[#dedede] pl-[7px] font-['Open_Sans',sans-serif] text-[12px] tracking-[-0.25px]">
        <span>File</span><span>Edit</span><span>View</span><span>Window</span><span>Help</span>
        <svg width="8" height="8" viewBox="0 0 8 8" className="mr-[6px] ml-auto"><path d="M1.500 1.500l5 5M6.500 1.500l-5 5" stroke="#000" strokeWidth="2.200" /></svg>
      </div>
      <Toolbar />
      <div className="flex h-[647px] shrink-0">
        <NavRail />
        <div className="flex flex-1 justify-center border-t-2 border-[#4a4a4a] bg-[#565656]">
          <div className="h-full w-[681px] bg-white pt-[41px] pl-[41px]"><Dashboard /></div>
        </div>
        <div className="flex w-[17px] flex-col items-center border-l border-white bg-[#f0f0f0]">
          <svg width="16" height="18"><path d="M4.500 10.500L8 7l3.500 3.500" fill="none" stroke="#555" strokeWidth="1.800" /></svg>
          <div className="h-[408px] w-[15px] bg-[#cdcdcd]" />
          <svg width="16" height="18" className="mt-auto"><path d="M4.500 7L8 10.500 11.500 7" fill="none" stroke="#555" strokeWidth="1.800" /></svg>
        </div>
        <SidePanel />
      </div>
      <Taskbar />
    </div>
  );
}
